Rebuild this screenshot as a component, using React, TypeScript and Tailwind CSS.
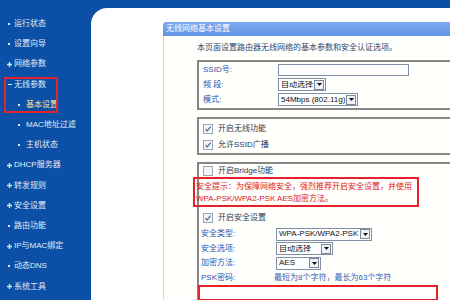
import React from "react";

type Kind = "dot" | "plus" | "minus" | "sub";

interface NavItem {
  label: string;
  kind: Kind;
  active?: boolean;
}

const topItems: NavItem[] = [
  { label: "运行状态", kind: "dot" },
  { label: "设置向导", kind: "dot" },
  { label: "网络参数", kind: "plus" },
];

const wirelessItems: NavItem[] = [
  { label: "无线参数", kind: "minus" },
  { label: "基本设置", kind: "sub", active: true },
];

const restItems: NavItem[] = [
  { label: "MAC地址过滤", kind: "sub" },
  { label: "主机状态", kind: "sub" },
  { label: "DHCP服务器", kind: "plus" },
  { label: "转发规则", kind: "plus" },
  { label: "安全设置", kind: "plus" },
  { label: "路由功能", kind: "dot" },
  { label: "IP与MAC绑定", kind: "plus" },
  { label: "动态DNS", kind: "dot" },
  { label: "系统工具", kind: "plus" },
];

function Bullet({ kind }: { kind: Kind }) {
  if (kind === "plus") {
    return (
      <svg width="5" height="5" viewBox="0 0 5 5" className="shrink-0">
        <path d="M2.5 0 V5 M0 2.5 H5" stroke="#cdeecf" strokeWidth="1.4" />
      </svg>
    );
  }
  if (kind === "minus") {
    return <span className="block w-[4px] h-[1.5px] bg-[#e6eef9] ml-[1px]" />;
  }
  return <span className="block w-[2px] h-[2px] bg-[#dce8f6] ml-[1px]" />;
}

function NavRow({ item }: { item: NavItem }) {
  const sub = item.kind === "sub";
  return (
    <div
      className={
        sub
          ? "flex items-center h-[20.2px] pl-[17px] gap-[4px]"
          : "flex items-center h-[20.2px] pl-[7px] gap-[2px]"
      }
    >
      <span className="w-[5px] flex items-center">
        <Bullet kind={item.kind} />
      </span>
      <span
        className={
          item.active
            ? "text-[8px] leading-none whitespace-nowrap text-[#f6e9a2]"
            : "text-[8px] leading-none whitespace-nowrap text-[#e4ecf7]"
        }
      >
        {item.label}
      </span>
    </div>
  );
}

function Check({ checked }: { checked?: boolean }) {
  return (
    <span className="w-[10px] h-[10px] shrink-0 border border-[#98a6ba] bg-[#f3f5f8] flex items-center justify-center">
      {checked && (
        <svg width="8" height="8" viewBox="0 0 8 8">
          <path d="M1.5 4.2 L3.2 6 L6.6 1.6" stroke="#5a7098" strokeWidth="1.3" fill="none" />
        </svg>
      )}
    </span>
  );
}

function Select({ value, w }: { value: string; w: string }) {
  return (
    <div className={`flex items-center h-[13px] border border-[#7f8fa8] bg-white ${w}`}>
      <span className="flex-1 pl-[2px] text-[8px] leading-none text-[#111] whitespace-nowrap overflow-hidden">
        {value}
      </span>
      <span className="w-[10px] h-[10px] mr-[1px] border border-[#7d8898] bg-[#eef1f6] flex items-center justify-center">
        <svg width="5" height="3" viewBox="0 0 5 3">
          <path d="M0 0 H5 L2.5 3 Z" fill="#111" />
        </svg>
      </span>
    </div>
  );
}

function CheckRow({ label, checked, h }: { label: string; checked?: boolean; h: string }) {
  return (
    <div className={`flex items-center pl-[4px] gap-[5px] ${h}`}>
      <Check checked={checked} />
      <span className="text-[8px] leading-none text-[#2d3856] whitespace-nowrap">{label}</span>
    </div>
  );
}

function FieldRow({ label, h, children }: { label: string; h: string; children: React.ReactNode }) {
  return (
    <div className={`flex items-center ${h}`}>
      <span className="w-[77px] shrink-0 pl-[2px] text-[8px] leading-none text-[#2356b0] whitespace-nowrap">
        {label}
      </span>
      {children}
    </div>
  );
}

export default function App() {
  return (
    <div className="w-[450px] h-[300px] overflow-hidden flex bg-[#0b4fa6] font-['Liberation_Sans','Noto_Sans_CJK_SC',sans-serif]">
      <nav className="w-[91px] shrink-0 pt-[14px] flex flex-col">
        {topItems.map((it) => (
          <NavRow key={it.label} item={it} />
        ))}
        <div className="relative">
          {wirelessItems.map((it) => (
            <NavRow key={it.label} item={it} />
          ))}
          <span className="absolute left-[4px] top-[2px] w-[54px] h-[36px] border-2 border-[#e3242c]" />
        </div>
        {restItems.map((it) => (
          <NavRow key={it.label} item={it} />
        ))}
      </nav>

      <main className="flex-1 mt-[8px] bg-white rounded-tl-[16px] pl-[72px] pt-[14px] overflow-hidden">
        <div className="w-[330px]">
          <div className="h-[14px] rounded-tl-[3px] bg-linear-to-b from-[#7eaaf0] to-[#6393e3] pl-[3px] flex items-center">
            <span className="text-[8px] leading-none text-white whitespace-nowrap">无线网络基本设置</span>
          </div>

          <div className="border-l border-[#efd4a4] bg-[#fffffc] pl-[33px] pt-[7px] flex flex-col h-[400px]">
            <p className="h-[10px] text-[8px] leading-[10px] text-[#34446a] whitespace-nowrap">
              本页面设置路由器无线网络的基本参数和安全认证选项。
            </p>

            <div className="mt-[7px] border-2 border-[#878787] pl-[2px] pb-[1px] flex flex-col">
              <FieldRow label="SSID号:" h="h-[15px]">
                <div className="w-[131px] h-[12px] border border-[#7f8fa8] bg-white" />
              </FieldRow>
              <FieldRow label="频 段:" h="h-[15px]">
                <Select value="自动选择" w="w-[48px]" />
              </FieldRow>
              <FieldRow label="模式:" h="h-[15px]">
                <Select value="54Mbps (802.11g)" w="w-[80px]" />
              </FieldRow>
            </div>

            <div className="mt-[7px] border-2 border-[#878787] pt-[2px] flex flex-col">
              <CheckRow label="开启无线功能" checked h="h-[16px]" />
              <CheckRow label="允许SSID广播" checked h="h-[16px]" />
            </div>

            <div className="mt-[7px] border-2 border-[#878787] flex flex-col flex-1">
              <CheckRow label="开启Bridge功能" h="h-[14px]" />

              <div className="-mt-[1px] -ml-[6px] w-[226px] border-2 border-[#e8202a] pt-[2px] pl-[1px] text-[8px] leading-[12px] text-[#e0161e] whitespace-nowrap">
                安全提示：为保障网络安全，强烈推荐开启安全设置，并使用
                <br />
                WPA-PSK/WPA2-PSK AES加密方法。
              </div>

              <div className="mt-[4px]">
                <CheckRow label="开启安全设置" checked h="h-[14px]" />
              </div>

              <div className="mt-[2px] flex flex-col">
                <FieldRow label="安全类型:" h="h-[14.5px]">
                  <Select value="WPA-PSK/WPA2-PSK" w="w-[96px]" />
                </FieldRow>
                <FieldRow label="安全选项:" h="h-[14.5px]">
                  <Select value="自动选择" w="w-[57px]" />
                </FieldRow>
                <FieldRow label="加密方法:" h="h-[14.5px]">
                  <Select value="AES" w="w-[45px]" />
                </FieldRow>
                <FieldRow label="PSK密码:" h="h-[14.5px]">
                  <span className="-ml-[2px] text-[8px] leading-none text-[#2f5fb5] whitespace-nowrap">
                    最短为8个字符，最长为63个字符
                  </span>
                </FieldRow>
              </div>

              <div className="-ml-[1px] w-[240px] h-[16px] border-2 border-[#e8202a] bg-white" />
            </div>
          </div>
        </div>
      </main>
    </div>
  );
}
